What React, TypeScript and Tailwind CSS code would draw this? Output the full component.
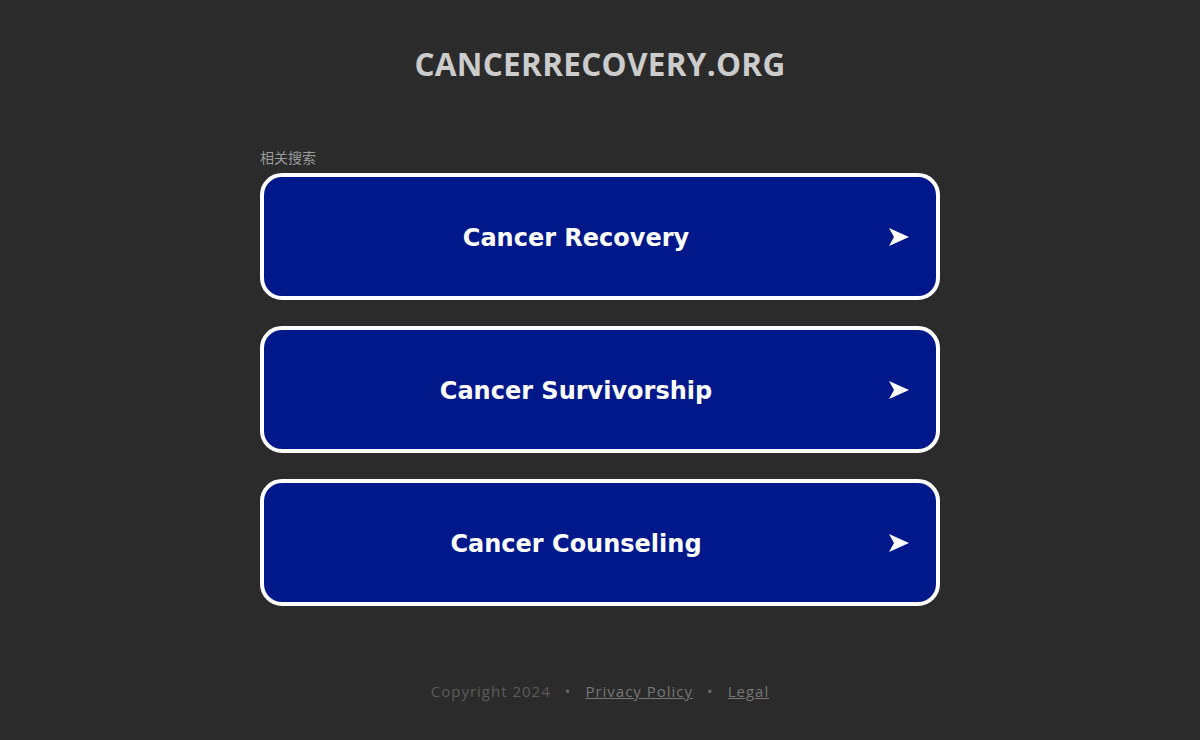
import React from "react";

const items = ["Cancer Recovery", "Cancer Survivorship", "Cancer Counseling"];

export default function App() {
  return (
    <div className="min-h-[740px] w-full bg-[#2b2b2b] flex flex-col items-center" style={{ fontFamily: '"Open Sans", sans-serif' }}>
      <h1 className="mt-[43px] h-[42px] flex items-center text-[31.5px] font-bold text-[#cccccc] tracking-[0.3px] leading-none" style={{ fontFamily: '"Open Sans", sans-serif' }}>
        CANCERRECOVERY.ORG
      </h1>
      <div className="mt-[65px] w-[680px] flex flex-col">
        <div className="text-[14px] leading-[16px] text-[#9a9a9a] mb-[7px]" style={{ fontFamily: '"Noto Sans", "Noto Sans CJK SC", sans-serif' }}>相关搜索</div>
        <div className="flex flex-col gap-[26px]">
          {items.map((t) => (
            <div key={t} className="h-[127px] rounded-[22px] border-[4px] border-white bg-[#00188a] flex items-center pl-[20px] pr-[26px]">
              <div className="flex-1 text-center text-white font-bold text-[24px] translate-y-[1px]" style={{ fontFamily: '"DejaVu Sans", Verdana, sans-serif' }}>{t}</div>
              <svg width="22" height="20" viewBox="0 0 22 20" className="ml-[20px]">
                <path d="M1 1 L21 10 L1 19 L6 10 Z" fill="white" />
              </svg>
            </div>
          ))}
        </div>
      </div>
      <div className="mt-[74px] flex items-center gap-[14px] text-[15px] text-[#6a6a6a] tracking-[1px]" style={{ fontFamily: '"Open Sans", sans-serif' }}>
        <span className="text-[#5c5c5c]">Copyright 2024</span>
        <span>•</span>
        <a className="underline text-[#777]">Privacy Policy</a>
        <span>•</span>
        <a className="underline text-[#777]">Legal</a>
      </div>
    </div>
  );
}
